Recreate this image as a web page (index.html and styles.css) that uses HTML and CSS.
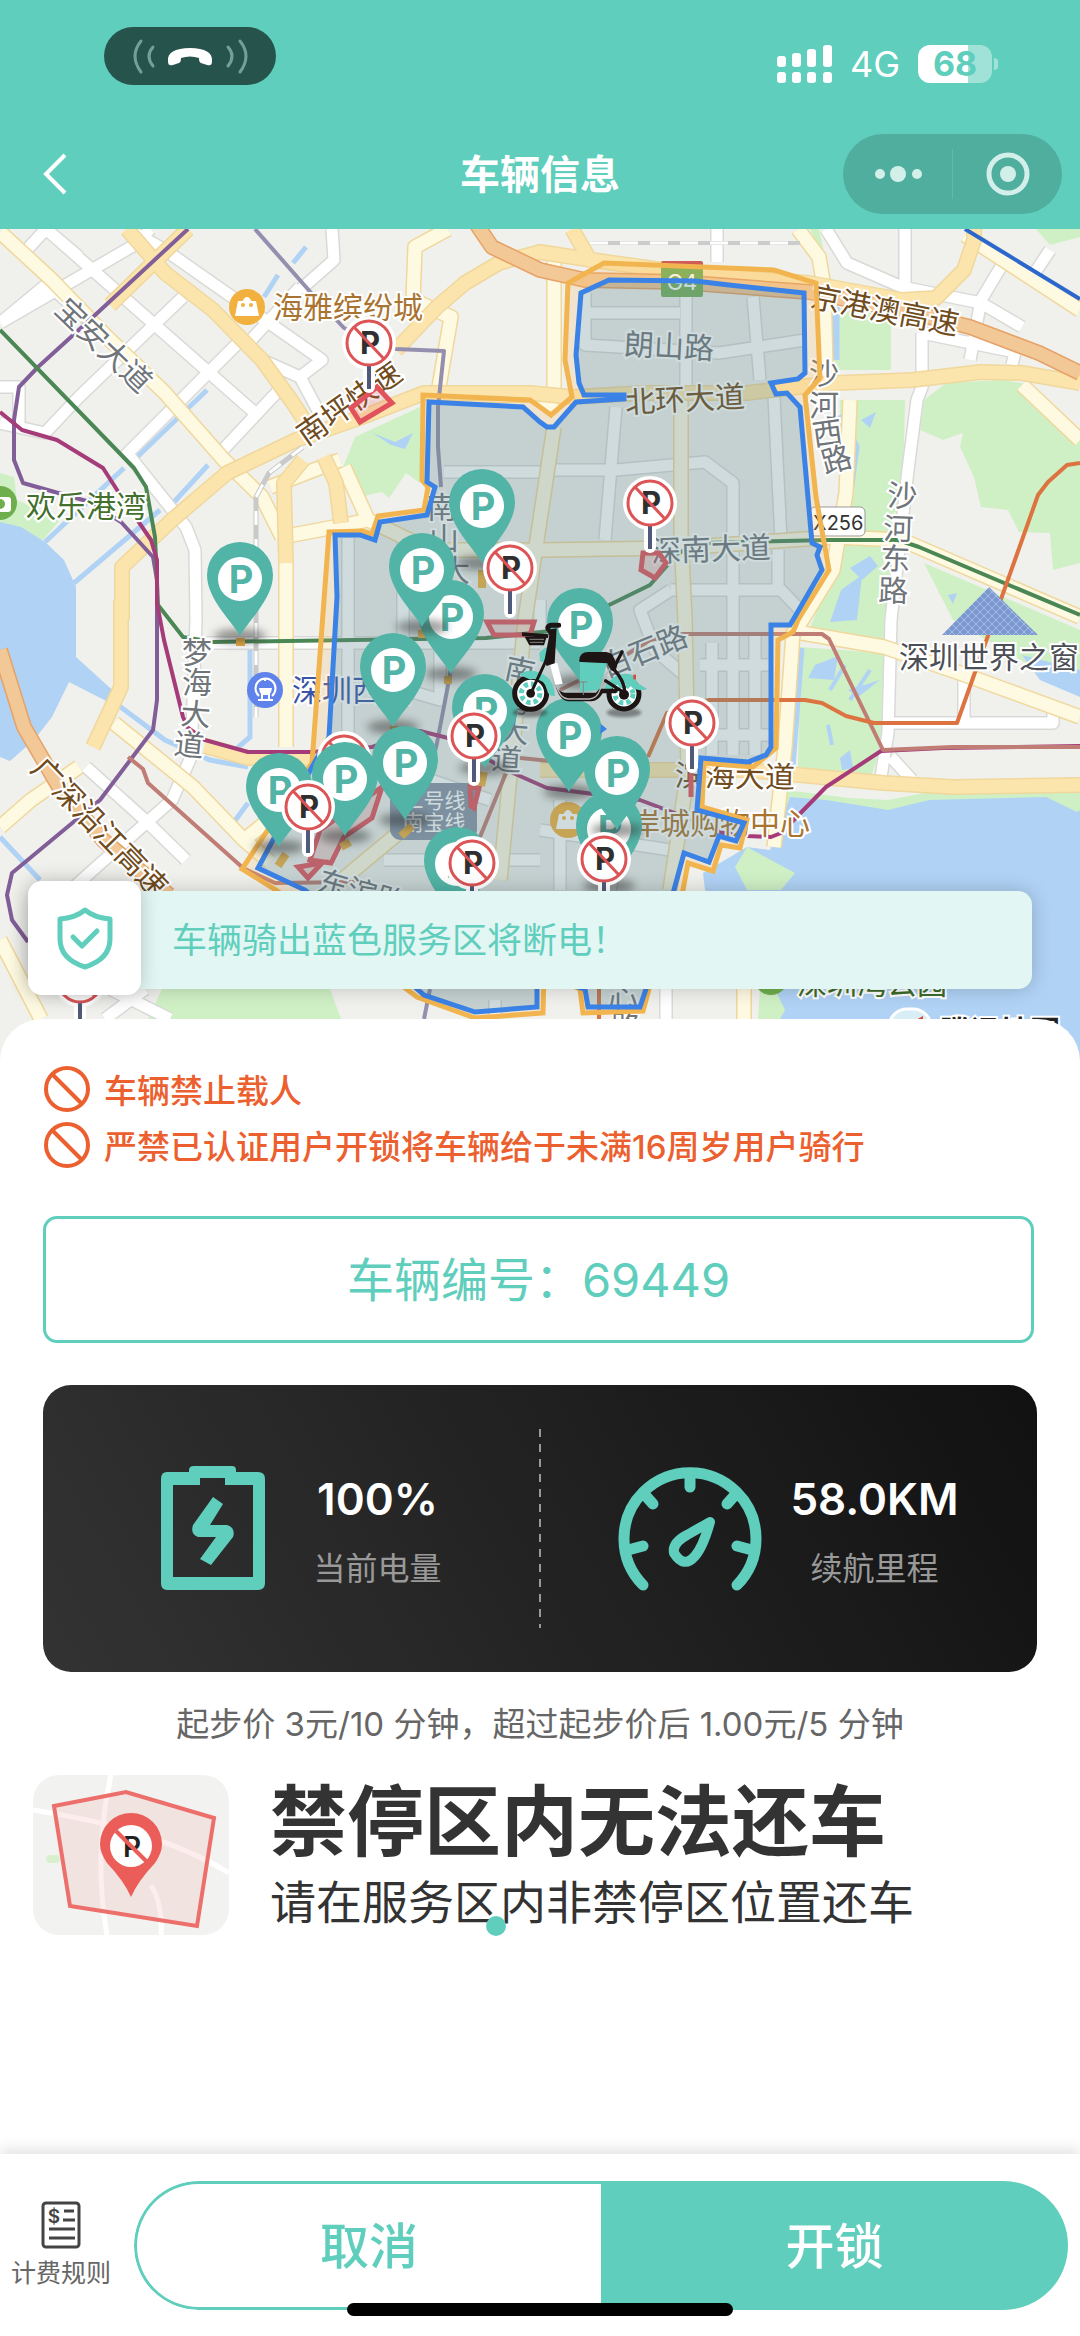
FILE: index.html
```html
<!DOCTYPE html>
<html lang="zh-CN">
<head>
<meta charset="utf-8">
<meta name="viewport" content="width=device-width, initial-scale=1">
<title>车辆信息</title>
<link rel="stylesheet" href="styles.css">
</head>
<body>
<header class="top">
  <div class="status">
    <div class="call-pill">
      <svg width="172" height="58" viewBox="0 0 172 58" aria-hidden="true">
        <path d="M64 34c-1-8 7-13 22-13s23 5 22 13c0 5-2 5-8 3-4-1-5-2-5-6-6-2-12-2-18 0 0 4-1 5-5 6-6 2-8 2-8-3z" fill="#fff"/>
        <g fill="none" stroke="#74a097" stroke-linecap="round" stroke-width="3"><path d="M37 14q-12 15 0 31M49 20q-8 9 0 19M136 14q12 15 0 31M124 20q8 9 0 19"/></g>
      </svg>
    </div>
    <div class="status-right">
      <svg width="55" height="38" viewBox="0 0 55 38" fill="#fff" aria-hidden="true">
        <rect x="0" y="11" width="9" height="11" rx="3"/><rect x="15" y="8" width="9" height="14" rx="3"/><rect x="30" y="4" width="9" height="18" rx="3"/><rect x="46" y="0" width="9" height="22" rx="3"/>
        <rect x="0" y="27" width="9" height="11" rx="3"/><rect x="15" y="27" width="9" height="11" rx="3"/><rect x="30" y="27" width="9" height="11" rx="3"/><rect x="46" y="27" width="9" height="11" rx="3"/>
      </svg>
      <span class="network">4G</span>
      <span class="battery">68</span>
    </div>
  </div>
  <nav class="nav">
    <button class="back" aria-label="返回"><svg width="26" height="44" viewBox="0 0 26 44"><path d="M23 3L4 22l19 19" fill="none" stroke="#fff" stroke-width="4"/></svg></button>
    <h1 class="title">车辆信息</h1>
    <div class="capsule">
      <button aria-label="更多"><svg width="48" height="20" viewBox="0 0 48 20" fill="#d2efea"><circle cx="6" cy="10" r="5"/><circle cx="24" cy="10" r="8"/><circle cx="43" cy="10" r="5"/></svg></button>
      <i></i>
      <button aria-label="关闭"><svg width="46" height="46" viewBox="0 0 46 46"><circle cx="23" cy="23" r="19" fill="none" stroke="#d2efea" stroke-width="5"/><circle cx="23" cy="23" r="8" fill="#d2efea"/></svg></button>
    </div>
  </nav>
</header>

<section class="map">
<svg class="map-canvas" viewBox="0 229 1080 831" role="img" aria-label="服务区地图">
  <defs>
    <g id="pin">
      <ellipse class="pin-shadow" rx="26" ry="7"/>
      <path d="M0 0C-8-15-33-37-33-61a33 33 0 0 1 66 0C33-37 8-15 0 0z" fill="#52b4a6"/>
      <circle cy="-57" r="22" fill="#fff"/>
      <text class="pin-p" x="1" y="-43">P</text>
    </g>
    <g id="nopark">
      <path d="M0 20v24" stroke="#fff" stroke-width="12" stroke-linecap="round"/>
      <circle r="27" fill="#fff"/>
      <path d="M0 22v24" stroke="#4f5a7a" stroke-width="4"/>
      <text class="no-p" x="1" y="11">P</text>
      <circle r="22" fill="none" stroke="#dc5456" stroke-width="3"/>
      <path d="M-15-16L15 16" stroke="#dc5456" stroke-width="3"/>
    </g>
    <path id="white-roads" d="M0 323L138 243 150 229M21 256L46 229 255 413M165 250L322 360 300 377M128 229L165 250M79 257L46 229M183 297L79 397 45 433 0 423M52 280L0 323M52 288L110 340M238 343L124 457M279 390L220 453M300 287L251 340M332 229L334 260 300 290M0 387H19V425M262 360L300 377 322 418M127 453L186 527 195 550 196 620 191 757 172 800 93 870 60 900M86 767L145 820 186 860M190 643H540M826 229L847 263 902 287 981 303 1022 327M905 229V283M717 229V262M1005 260L981 300 970 360M1050 250L1032 277M922 333L1015 352 1012 365M922 333V387L917 400 908 470 891 620 888 733 881 777M891 757L912 780M891 723H1053V708M964 668V723M145 989L105 1019M110 989L170 1019M666 989V1019"/>
    <path id="inner-roads" d="M686 297V395M753 297L760 380M585 313H680M585 293V345L719 353 805 340M616 407L605 540M774 397L781 540M540 470H616L705 462 733 483V755M671 590H781L800 610M671 590L640 610 655 650 690 680M778 550V590M444 472H540M348 538V750M403 540V640M440 640V700L372 680M540 600V640M700 665H771M700 735H771M712 643V755M755 633V755M384 860H540M430 780L490 800M540 830L670 850M560 800V890M630 800L610 890M495 1000V1015"/>
    <path id="pale-roads" d="M0 232L52 280 107 337 165 393 224 460 262 497 282 537M448 229L415 247 413 300 451 317 439 387M798 229L819 257 824 287 826 370M850 400L846 493 833 570 802 620 793 633 785 747 774 847M540 550L678 548 833 537 902 540 1080 617M540 550H440M802 633L884 647 960 673 1080 717M965 235L1080 310M114 723L193 787 244 840 270 862M0 827L31 800 79 767M244 840L275 815M286 563V747M681 397V537L685 620 688 770 670 890M554 427L540 520 525 620 500 880M282 537L345 525 368 520M344 467L368 520 420 545M554 250V395M1022 385L1080 440M0 940L41 1019M744 989V1019M330 890L450 790M270 487L340 460M430 395H540L554 410"/>
    <path id="yellow-roads" d="M127 229L165 273 213 310 262 360 293 403 306 423M188 229L110 305M122 620V567L172 520 227 473 296 440 362 417 424 393 530 393 572 397 643 393 747 393 798 387 836 383 912 380 981 372 1022 373 1080 383M396 350L437 307 465 283 499 263 540 252 592 260 678 272 809 283 902 300 936 298 964 270 974 240V229M572 229L590 260M121 600V687L93 747M286 563L284 483 303 460M324 457L336 483 341 523M205 746L248 758H312M540 770H747L884 783 953 787 1080 785"/>
    <path id="orange-roads" d="M477 225L492 247 540 270 585 280 678 282 809 292 902 310 970 327 1039 353 1080 373M0 650L24 727 59 787 103 840 169 895"/>
    <pattern id="grid" width="8" height="8" patternUnits="userSpaceOnUse"><rect width="8" height="8" fill="#7b98cf"/><path d="M0 0l8 8M8 0L0 8" stroke="#a6bce6" stroke-width="1"/></pattern>
  </defs>

  <rect y="229" width="1080" height="831" fill="#f0f1ec"/>
  <g class="green">
    <path d="M0 473L14 477 17 500 60 520 43 540 0 530zM420 407L355 437 343 467 360 497 382 492 389 498 406 473 420 483zM834 307L891 317V370H834zM840 400H905L903 480 891 640H805L843 547zM800 647L884 653 886 733 870 780 798 767zM920 430L924 400 946 383 1001 380 1022 383 1080 437V563L1053 570 1050 533 1019 532 1008 510 981 507 974 477 960 447 963 433 943 440zM924 563L1080 630V690L1020 660 953 620zM1036 229L1050 245 1080 237V229zM162 989H330L341 1019H148zM785 790L850 798 888 800 929 792 1080 790V830H770zM810 229L826 262 819 229z"/>
  </g>
  <g class="water">
    <path d="M0 522L21 527 45 542 64 560 76 587V657L120 697 118 707 69 682 52 717 34 740 10 761 0 757z"/>
    <path d="M790 797L826 800 870 807 888 810 929 800 1046 797 1077 812 1080 810V1060H781L770 989 705 890 703 873 747 847 770 850z"/>
    <path d="M373 433L395 442 413 433 405 449 391 445zM861 420L876 412 870 428zM1022 655L1080 670V697L1040 680zM850 568L870 556 878 566 862 580zM841 590L862 575 857 620 830 622zM815 665L838 656 834 680 808 678zM848 690L880 680 858 697zM840 758L850 750 853 768 842 770zM948 595L957 593 953 604z"/>
    <g class="creek"><path d="M124 468L45 542M160 510L74 583M207 390L134 460M208 465L174 502M306 247L293 263M278 275L264 297" stroke-width="5"/><path d="M840 415L855 447 848 500M835 307V360M800 648L790 780" stroke-width="9"/><path d="M118 705L165 740 210 760 248 767M250 650V737L235 750M0 837L40 880M234 822L248 803" stroke-width="5"/><path d="M870 670L850 700M845 665L830 690M828 725L832 745" stroke-width="4"/></g>
  </g>
  <path class="green" d="M747 847L795 873 781 890H747L735 867zM760 989H775L785 1010 780 1019H758z"/>

  <use href="#white-roads" class="casing w14"/><use href="#inner-roads" class="casing w14"/>
  <use href="#white-roads" class="white w11"/><use href="#inner-roads" class="white w11"/>
  <use href="#pale-roads" class="ycasing w16"/><use href="#pale-roads" class="pale w13"/>
  <use href="#yellow-roads" class="ycasing w16"/><use href="#yellow-roads" class="yellow w13"/>
  <use href="#orange-roads" class="ocasing w16"/><use href="#orange-roads" class="orange w13"/>

  <g class="rail"><path d="M303 447L269 473 256 497V717" stroke="#c9c9c9" stroke-width="5"/><path d="M303 447L269 473 256 497V717" stroke="#fff" stroke-width="3" stroke-dasharray="14 14"/><path d="M590 243H800" stroke="#ccc" stroke-width="4"/><path d="M590 243H800" stroke="#fff" stroke-width="3" stroke-dasharray="18 12"/></g>

  <g class="lines">
    <path stroke="#948fae" d="M255 229L313 295 344 328 396 349 444 351 438 407V447L441 487M456 640L449 680 437 743 428 780M430 989L424 1019"/>
    <path stroke="#825e99" d="M188 229L93 317 38 367 19 387 14 420V460L23 483 90 502 121 522 153 557 157 580V700L153 730 100 800 12 873 7 895 12 920 28 942"/>
    <path stroke="#4b8755" d="M0 330L134 468 146 487 155 537 158 605 183 637 213 642 486 638 560 630 605 607 650 585 678 553 705 543 829 540H898L919 547 1080 615"/>
    <path stroke="#a53b79" d="M0 412L22 430 57 440 103 468 119 493 151 540 157 560V603L164 640 183 717 188 728 205 740 248 752H312L372 747 420 731 448 738 513 773 547 788 640 800 688 818 723 833 747 836 771 837 781 833 826 787 881 751 943 748 1080 746"/>
    <path stroke="#c07d75" d="M560 690L610 665 650 640 683 634H822L829 639 883 750 953 747H1080M128 757L143 769 148 783 243 868 275 883 355 882M480 837L506 773M500 756L560 762"/>
    <path stroke="#dc7340" d="M1080 463L1067 465 1048 482 1038 495 957 723H874L846 716 822 703 805 700H709L667 713 648 757M599 989V1019"/>
    <path stroke="#2c68cc" d="M965 229L1080 299"/>
  </g>

  <path d="M989 587L1038 635H942z" fill="url(#grid)"/>
  <g><rect x="661" y="261" width="42" height="36" rx="2" fill="#74b15a"/><path d="M661 267v-4l2-2h38l2 2v4z" fill="#cf5d56"/><text class="shield-text" x="682" y="290">G4</text></g>
  <g><rect x="810" y="507" width="55" height="29" rx="5" fill="#fff" stroke="#999"/><text class="sign" x="813" y="530">X256</text></g>
  <g><rect x="390" y="783" width="87" height="57" rx="11" fill="#8894a8"/><text class="metro" x="434" y="808">二号线</text><text class="metro" x="434" y="830">南宝线</text></g>

  <g class="road-name">
    <text transform="translate(104 345) rotate(44)" y="11">宝安大道</text>
    <text transform="translate(669 347) rotate(3)" y="10">朗山路</text>
    <text transform="translate(711 550) rotate(-2)" y="10">深南大道</text>
    <text x="824 824 829 840" y="384 416 446 474" rotate="0 0 -8 -16">沙河西路</text>
    <text x="902 898 895 893" y="506 539 569 601" rotate="2 2 2 2">沙河东路</text>
    <text x="197 197 195 188" y="663 693 724 754" rotate="0 0 4 6">梦海大道</text>
    <text x="442 444 455 460" y="518 549 581 612">南山大道</text>
    <text x="518 515 513 506" y="678 709 741 769" rotate="12 10 4 4">南海大道</text>
    <text transform="translate(644 651) rotate(-22)" y="11">白石路</text>
    <text transform="translate(362 892) rotate(16)" y="11">东滨路</text>
    <text x="620 623 626" y="979 1009 1037">中心路</text>
  </g>
  <g class="highway-name">
    <text transform="translate(349 403) rotate(-35)" y="11">南坪快速</text>
    <text transform="translate(885 310) rotate(11)" y="11">京港澳高速</text>
    <text transform="translate(685 399) rotate(-3)" y="11">北环大道</text>
    <text transform="translate(735 776) rotate(1)" y="11">滨海大道</text>
    <text transform="translate(100 827) rotate(46)" y="11">广深沿江高速</text>
  </g>
  <g class="place">
    <text x="273" y="318" fill="#a97430">海雅缤纷城</text>
    <text x="26" y="517" fill="#43702c">欢乐港湾</text>
    <text x="292" y="701" fill="#3855a8">深圳西站</text>
    <text x="899" y="668" fill="#4c4f55">深圳世界之窗</text>
    <text x="600" y="834" fill="#a97430">海岸城购物中心</text>
    <text x="797" y="994" fill="#3c6b2b">深圳湾公园</text>
    <text class="brand" x="940" y="1042" fill="#222">腾讯地图</text>
  </g>
  <g id="bag"><circle cx="247" cy="307" r="18" fill="#f2b13e"/><path d="M238 301h18l3 15h-24zM242 302q5-10 10 0" fill="#fff"/><circle cx="243" cy="305" r="2" fill="#f2b13e"/><circle cx="251" cy="305" r="2" fill="#f2b13e"/></g>
  <use href="#bag" x="321" y="513"/>
  <circle cy="503" r="17" fill="#6fae4d"/><rect x="-12" y="497" width="23" height="15" rx="3" fill="#fff"/><circle cy="504" r="5" fill="#6fae4d"/>
  <circle cx="265" cy="690" r="18" fill="#5f83ea"/><path d="M259 696a10 10 0 1 1 13 0M258 700h15M265 678v3M262 694v5M269 694v5" fill="none" stroke="#fff" stroke-width="2"/><path d="M259 688h13q-1 7-4 7h-5q-3 0-4-7z" fill="#fff"/>
  <circle cx="771" cy="978" r="17" fill="#6fae4d"/>
  <rect x="889" y="1009" width="42" height="42" rx="18" fill="#d9edf7" stroke="#fff" stroke-width="3"/><path d="M916 1020l7-4v8z" fill="#d9432f"/>

  <path class="zone-outer" fill-rule="evenodd" d="M423 395L530 400 540 407 551 415 572 397 565 360 568 283 604 263 774 270 816 283 820 378 805 395 816 497 829 570 798 620 793 632 778 640 776 748 753 767 704 763 702 807 747 820 740 848 721 845 713 871 688 863 683 890 649 989 643 1011 583 1013 580 989 544 975 543 1013 475 1018 417 997 276 890 242 869 312 763 324 600 329 532 362 531 372 534 378 516 424 510 428 487 422 480zM429 402L523 407 540 422 547 427 554 427 576 402 624 399V395H584L579 383 576 355 581 293 609 280 695 281 729 285 804 293 805 373 798 379 771 383 776 394 787 393 800 407 812 543 820 547 817 555 822 570 793 620 790 625H771V747L766 755 748 762 701 758 697 810 744 823 736 841 719 836 709 862 684 853 674 890 646 989 640 1007H588L585 989 537 975V1007L475 1012 424 995 305 890 258 868 312 767 329 737 337 597 335 535H360L375 540 380 522 427 515 435 487 427 482z"/>
  <path class="zone-edge" d="M423 395L530 400 540 407 551 415 572 397 565 360 568 283 604 263 774 270 816 283 820 378 805 395 816 497 829 570 798 620 793 632 778 640 776 748 753 767 704 763 702 807 747 820 740 848 721 845 713 871 688 863 683 890 649 989 643 1011 583 1013 580 989 544 975 543 1013 475 1018 417 997 276 890 242 869 312 763 324 600 329 532 362 531 372 534 378 516 424 510 428 487 422 480z"/>
  <g class="banned"><path d="M377 387L392 403 360 422 351 408zM643 553H659L666 563 655 578 641 570zM487 622H534L530 635H494zM382 787L372 818 344 837 331 863 310 860 320 830zM298 867L322 863 308 878zM470 787L479 788 474 808 471 806zM691 773V797"/></g>
  <g class="spot"><path d="M236 642h9M418 634h9M448 676v8M390 730h8M286 854l-8 12M350 842l-9 5M412 826l-11 10M484 772l-3 14M482 570v18"/></g>
  <path class="zone" d="M429 402L523 407 540 422 547 427 554 427 576 402 624 399V395H584L579 383 576 355 581 293 609 280 695 281 729 285 804 293 805 373 798 379 771 383 776 394 787 393 800 407 812 543 820 547 817 555 822 570 793 620 790 625H771V747L766 755 748 762 701 758 697 810 744 823 736 841 719 836 709 862 684 853 674 890 646 989 640 1007H588L585 989 537 975V1007L475 1012 424 995 305 890 258 868 312 767 329 737 337 597 335 535H360L375 540 380 522 427 515 435 487 427 482z"/>

  <use href="#pin" x="482" y="563"/><use href="#pin" x="240" y="636"/><use href="#nopark" x="369" y="343"/>
  <use href="#pin" x="451" y="674"/><use href="#pin" x="422" y="627"/><use href="#nopark" x="510" y="568"/><use href="#nopark" x="650" y="503"/>
  <use href="#pin" x="393" y="727"/><use href="#pin" x="485" y="768"/><use href="#nopark" x="474" y="736"/>
  <use href="#nopark" x="344" y="758"/><use href="#pin" x="345" y="836"/><use href="#pin" x="405" y="820"/><use href="#pin" x="279" y="847"/><use href="#nopark" x="308" y="807"/>
  <use href="#pin" x="457" y="921"/><use href="#nopark" x="472" y="863"/>
  <use href="#pin" x="580" y="682"/><use href="#pin" x="569" y="792"/>
  <use href="#pin" x="609" y="886"/><use href="#pin" x="617" y="830"/><use href="#nopark" x="604" y="859"/><use href="#nopark" x="692" y="723"/>
  <use href="#nopark" x="80" y="980"/>
  <path d="M601 724l6 5-7 5z" fill="#3b82e6"/>

  <!-- the rented scooter -->
  <g transform="translate(500 610) scale(.3333)">
    <g class="pin-shadow"><ellipse cx="90" cy="308" rx="52" ry="14"/><ellipse cx="372" cy="308" rx="52" ry="14"/></g>
    <g fill="#fff" stroke="#1c1514" stroke-width="15"><circle cx="92" cy="250" r="48"/><circle cx="372" cy="252" r="45"/></g>
    <g fill="none" stroke="#5fd0bf" stroke-width="15" stroke-dasharray="13 9"><circle cx="92" cy="250" r="28"/><circle cx="372" cy="252" r="27"/></g>
    <path d="M58 195q25-22 65-5 38 15 42 68-20 2-24-18-8-38-52-32zM118 130q12-20 34-20l-12 50-20-6zM312 235q35-60 92-38l8 22 30 18q-30 10-50-8-36-20-62 14zM240 155h82l-24 85-58 6z" fill="#61cdbd"/>
    <path d="M150 162l22-3 16 62-22 4z" fill="#fff"/>
    <path d="M400 194h8v14h-8z" fill="#d9473f"/>
    <g fill="#1c1514"><path d="M66 67l80 6-2 11-78-6z"/><path d="M74 80h66l-8 26H88z"/><path d="M140 60l30-5-6 105-24 8-7-14 15-78z"/><path d="M238 150q2-24 26-24h54q20 2 24 18l10 20-6 22-14-6-10-20-78-4q-8 0-6-6z"/><circle cx="92" cy="250" r="13"/><circle cx="372" cy="254" r="15"/><path d="M166 222q10 26 28 26h94l10-12h60l-10 14h-40q-14 24-34 24H204q-28-4-38-52z"/></g>
    <g fill="none" stroke="#1c1514" stroke-linecap="round"><path d="M144 56q-2-10 10-10h22" stroke-width="15"/><path d="M148 130L98 238" stroke-width="9"/><path d="M366 126l-26 50q34 38 34 68M316 212l56 36" stroke-width="10"/></g>
    <path d="M168 225q12 40 36 42h64q24-2 32-28l14-38 16-26" fill="none" stroke="#b9b9b9" stroke-width="4"/>
    <path d="M88 88h44M90 97h40M250 215v40M236 216h26" stroke="#888" stroke-width="3"/>
  </g>
</svg>
<div class="notice">
  <div class="notice-icon"><svg width="56" height="64" viewBox="0 0 56 64" fill="none" stroke="#5fcebc" stroke-width="5" stroke-linecap="round" stroke-linejoin="round"><path d="M28 4q10 8 25 9v20q0 20-25 28Q3 53 3 33V13q15-1 25-9z"/><path d="M16 31l9 9 15-15"/></svg></div>
  <p>车辆骑出蓝色服务区将断电！</p>
</div>
</section>

<main class="sheet">
  <ul class="warnings">
    <li><svg width="48" height="48" viewBox="0 0 48 48" fill="none" stroke="#ec5f2f" stroke-width="4"><circle cx="24" cy="24" r="21"/><path d="M9 9l30 30"/></svg>车辆禁止载人</li>
    <li><svg width="48" height="48" viewBox="0 0 48 48" fill="none" stroke="#ec5f2f" stroke-width="4"><circle cx="24" cy="24" r="21"/><path d="M9 9l30 30"/></svg>严禁已认证用户开锁将车辆给于未满16周岁用户骑行</li>
  </ul>
  <div class="number">车辆编号：69449</div>
  <div class="stats">
    <div class="stat">
      <svg width="144" height="144" viewBox="0 0 144 144" aria-hidden="true"><path fill="#5fcebc" fill-rule="evenodd" d="M26 15h22v-2q0-4 5-4h38q4 0 4 4v2h22q7 0 7 7v104q0 7-7 7H26q-6 0-6-7V22q0-7 6-7zm6 13v92h80V28H84v-7H59v7z"/><path d="M72 40l10 7-13 21h17q9 3 6 12L70 108l-11-6 16-22H57q-8-3-5-12z" fill="#5fcebc"/></svg>
      <div><strong>100%</strong><span>当前电量</span></div>
    </div>
    <div class="stat">
      <svg width="144" height="144" viewBox="0 0 144 144" fill="none" stroke="#5fcebc" stroke-width="11" stroke-linecap="round" aria-hidden="true"><path d="M25 128A66 66 0 1 1 119 128M72 17v13M27 38l8 9M117 38l-8 9M10 93l15-4M134 93l-15-4"/><path d="M92 65L69 78Q54 86 56 96q10 16 21 3 8-9 15-34z" stroke-width="10" stroke-linejoin="round"/></svg>
      <div><strong>58.0KM</strong><span>续航里程</span></div>
    </div>
  </div>
  <p class="price">起步价 3元/10 分钟，超过起步价后 1.00元/5 分钟</p>
  <section class="promo">
    <svg width="196" height="160" viewBox="0 0 196 160" aria-hidden="true">
      <rect width="196" height="160" rx="26" fill="#f2f3f1"/>
      <path d="M0 35Q60 44 110 60T196 98M78 0Q60 80 74 160M118 110Q130 130 128 160" fill="none" stroke="#fff" stroke-width="5"/><rect x="13" y="80" width="14" height="8" rx="4" fill="#d9f0cf"/>
      <path d="M21 31L93 17 181 43 164 151 37 131z" fill="#ee7a76" fill-opacity=".13" stroke="#ec6f6b" stroke-width="4"/>
      <path d="M98 122Q91 106 74 88Q67 78 67 69a31 31 0 0 1 62 0q0 9-7 19Q105 106 98 122z" fill="#eb5d58"/><circle cx="98" cy="71" r="21" fill="#fff"/><text class="promo-p" x="99" y="82">P</text><path d="M83 56l31 31" stroke="#eb5d58" stroke-width="4"/>
    </svg>
    <div class="promo-text"><h2>禁停区内无法还车</h2><p>请在服务区内非禁停区位置还车</p></div>
    <i class="dot"></i>
  </section>
</main>

<footer class="actions">
  <a href="#rules" class="rules">
    <svg width="40" height="48" viewBox="0 0 40 48" fill="none" stroke="#444" stroke-width="3" aria-hidden="true"><rect x="2" y="2" width="36" height="44" rx="3"/><path d="M23 10h10M22 19h12M8 28h26M8 37h26"/><text class="dollar" x="13" y="22">$</text></svg>
    计费规则
  </a>
  <div class="pair"><button class="cancel">取消</button><button class="unlock">开锁</button></div>
  <i class="home"></i>
</footer>
</body>
</html>
```
FILE: styles.css
```css
* { box-sizing: border-box; }
body {
  margin: 0;
  min-height: 100vh;
  display: flex;
  flex-direction: column;
  background: #fff;
  color: #333;
  font-family: Inter, "Noto Sans CJK SC", sans-serif;
}
h1, h2, p, ul { margin: 0; padding: 0; }
button { border: 0; padding: 0; background: none; font: inherit; color: inherit; }
svg { display: block; flex: none; }

.top { background: #5fcebc; color: #fff; }
.status { display: flex; justify-content: space-between; align-items: flex-start; height: 119px; padding: 27px 88px 0 104px; }
.call-pill { width: 172px; height: 58px; border-radius: 29px; background: #26544c; }
.status-right { display: flex; align-items: center; gap: 18px; padding-top: 17px; }
.network { font-size: 36px; line-height: 40px; }
.battery {
  position: relative;
  width: 74px;
  height: 38px;
  border-radius: 12px;
  background: linear-gradient(90deg, #fff 68%, #a0e2d8 68%);
  color: #5fcebc;
  font-size: 34px;
  font-weight: 700;
  line-height: 38px;
  text-align: center;
}
.battery::after { content: ""; position: absolute; right: -6px; top: 13px; width: 4px; height: 12px; border-radius: 0 4px 4px 0; background: #a0e2d8; }
.nav { display: grid; grid-template-columns: 219px 1fr 219px; align-items: center; height: 110px; padding: 0 18px; }
.back { justify-self: start; padding-left: 24px; }
.title { padding-bottom: 4px; font-size: 40px; font-weight: 600; text-align: center; }
.capsule { display: flex; align-items: center; height: 80px; border-radius: 40px; background: #50ae9f; }
.capsule button { flex: 1; display: flex; justify-content: center; }
.capsule i { width: 1px; height: 50px; background: #5fbcad; }

.map { position: relative; }
.map-canvas { width: 100%; height: auto; }
.green { fill: #cff0c5; }
.water { fill: #b0d2f5; }
.creek { fill: none; stroke: #b0d2f5; }
.casing, .white, .ycasing, .pale, .yellow, .ocasing, .orange, .rail, .lines { fill: none; stroke-linejoin: round; }
.casing { stroke: #d9dad8; }
.white { stroke: #fff; }
.ycasing { stroke: #f0d79c; }
.pale { stroke: #fefae2; }
.yellow { stroke: #fce5ac; }
.ocasing { stroke: #e6a267; }
.orange { stroke: #f2c897; }
.w11 { stroke-width: 11px; }
.w13 { stroke-width: 13px; }
.w14 { stroke-width: 14px; }
.w16 { stroke-width: 16px; }
.lines { stroke-width: 4px; }
.road-name, .highway-name { font-size: 30px; text-anchor: middle; fill: #70757a; stroke: #fff; stroke-width: 4px; paint-order: stroke; }
.highway-name { fill: #704c1c; }
.place { font-size: 30px; stroke: #fff; stroke-width: 4px; paint-order: stroke; }
.brand { font-weight: 700; }
.shield-text { font-size: 22px; fill: #fff; text-anchor: middle; }
.sign { font-size: 20px; fill: #333; }
.metro { font-size: 21px; fill: #fff; text-anchor: middle; }
.zone-outer { fill: rgba(245, 180, 90, .2); }
.zone-edge { fill: none; stroke: #f2b44e; stroke-width: 5px; }
.zone { fill: rgba(95, 135, 142, .3); stroke: #3b82e6; stroke-width: 5px; }
.banned { fill: rgba(220, 90, 100, .2); stroke: #e2525c; stroke-width: 5px; }
.spot { stroke: #f0b040; stroke-width: 8px; }
.pin-shadow { fill: #333; opacity: .5; filter: blur(4px); }
.pin-p { font-size: 38px; font-weight: 700; fill: #52b4a6; text-anchor: middle; }
.no-p { font-size: 31px; font-weight: 700; fill: #2f2f2f; text-anchor: middle; }

.notice {
  position: absolute;
  left: 28px;
  right: 48px;
  bottom: 71px;
  display: flex;
  align-items: center;
  height: 98px;
  border-radius: 14px;
  background: #e2f6f3;
  box-shadow: 0 0 20px rgba(0, 0, 0, .2);
  color: #5fcebc;
  font-size: 35px;
}
.notice p { padding-bottom: 6px; }
.notice-icon { display: flex; align-items: center; justify-content: center; align-self: flex-end; width: 113px; height: 114px; margin: 0 31px -6px 0; border-radius: 14px; background: #fff; box-shadow: 0 0 20px rgba(0, 0, 0, .2); }

.sheet { position: relative; flex: 1; margin-top: -41px; padding: 42px 43px 0; border-radius: 42px 42px 0 0; background: #fff; }
.warnings { list-style: none; color: #ec5f2f; font-size: 33px; font-weight: 500; }
.warnings li { display: flex; align-items: center; gap: 13px; height: 56px; }
.number { display: flex; align-items: center; justify-content: center; height: 127px; margin: 43px 3px 0 0; padding-bottom: 6px; border: 3px solid #5fcebc; border-radius: 14px; color: #5fcebc; font-size: 47px; }
.stats { position: relative; display: grid; grid-template-columns: 1fr 1fr; height: 287px; margin-top: 42px; border-radius: 28px; background: linear-gradient(60deg, #333, #111); }
.stats::after { content: ""; position: absolute; left: 50%; top: 44px; bottom: 44px; width: 2px; margin-left: -1px; background: repeating-linear-gradient(#999 0 8px, transparent 8px 15px); }
.stat { display: flex; align-items: center; justify-content: center; gap: 28px; text-align: center; }
.stat strong { display: block; margin-bottom: 16px; color: #fff; font-size: 44px; font-weight: 600; line-height: 64px; }
.stat span { display: block; color: #999; font-size: 32px; line-height: 44px; }
.price { margin-top: 28px; color: #666; font-size: 33px; line-height: 48px; text-align: center; }
.promo { position: relative; display: flex; gap: 41px; margin: 27px -10px 0; }
.promo-text { color: #333; white-space: nowrap; }
.promo h2 { font-size: 77px; font-weight: 700; line-height: 94px; }
.promo p { font-size: 46px; line-height: 66px; }
.promo-p { font-size: 28px; font-weight: 600; fill: #222; text-anchor: middle; }
.dot { position: absolute; left: 453px; bottom: -1px; width: 20px; height: 20px; border-radius: 50%; background: #5fcebc; }

.actions { position: relative; display: flex; height: 182px; padding: 27px 12px 0 0; background: #fff; box-shadow: 0 -6px 12px rgba(0, 0, 0, .1); }
.rules { display: flex; flex-direction: column; align-items: center; gap: 6px; width: 122px; padding-top: 20px; color: #666; font-size: 25px; line-height: 36px; text-decoration: none; white-space: nowrap; }
.dollar { font-size: 19px; font-weight: 600; fill: #444; stroke: none; text-anchor: middle; }
.pair { flex: 1; display: grid; grid-template-columns: 1fr 1fr; height: 129px; margin-left: 12px; border-radius: 65px; overflow: hidden; font-size: 49px; font-weight: 500; }
.pair button { padding-bottom: 6px; }
.cancel { border: solid #5fcebc; border-width: 3px 0 3px 3px; border-radius: 65px 0 0 65px; color: #5fcebc; }
.unlock { background: #5fcebc; color: #fff; }
.home { position: absolute; left: 50%; bottom: 20px; width: 386px; height: 13px; margin-left: -193px; border-radius: 7px; background: #000; }
```
